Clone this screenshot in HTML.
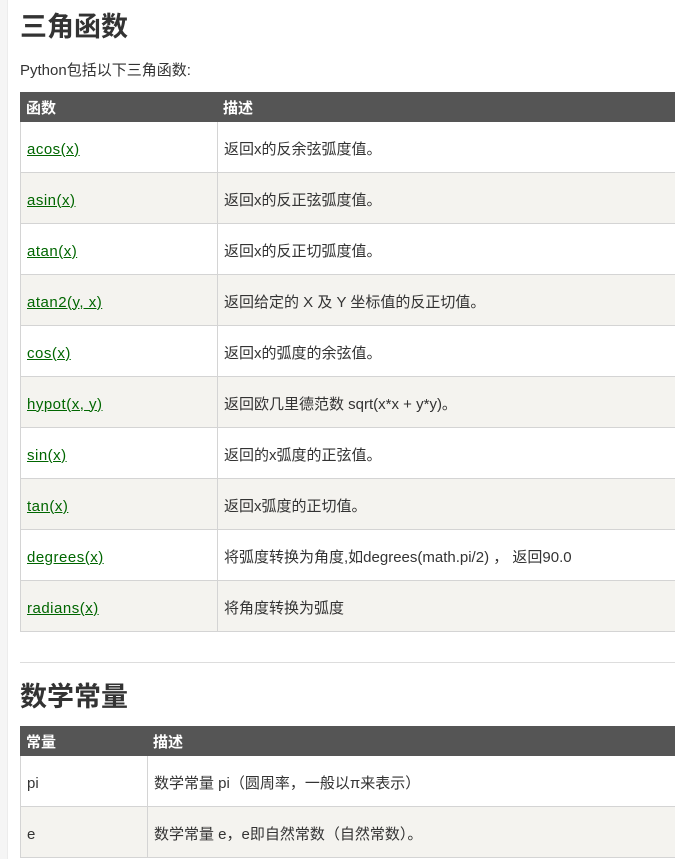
<!DOCTYPE html>
<html><head><meta charset="utf-8"><style>
body{margin:0;background:#fff;font-family:"Liberation Sans","Noto Sans CJK SC",sans-serif;color:#333;width:675px;height:859px;overflow:hidden;position:relative}
.strip{position:absolute;left:0;top:0;width:7px;height:859px;background:#f5f5f5;border-right:1px solid #ececec}
h2{position:absolute;left:20px;margin:0;font-size:27px;font-weight:bold;color:#333;line-height:30px}
p{position:absolute;left:20px;top:61px;margin:0;font-size:15px;line-height:20px}
table{position:absolute;left:20px;border-collapse:collapse;font-size:15px;table-layout:fixed}
th{background:#555;color:#fff;text-align:left;height:25px;padding:3px 5px 0;font-weight:bold;font-size:15px;border:1px solid #555;line-height:20px}
td{height:45px;padding:5px 6px 0;border:1px solid #d4d4d4;line-height:20px;vertical-align:middle}
td span{display:inline-block;height:20px;line-height:20px;vertical-align:middle}
tr:nth-child(odd) td{background:#f4f3ef}
a{color:#006600;text-decoration:underline;letter-spacing:0.5px}
hr{position:absolute;left:20px;top:662px;width:660px;margin:0;border:0;border-top:1px solid #ddd}
</style></head><body>
<div class="strip"></div>
<h2 style="top:12px">三角函数</h2>
<p>Python包括以下三角函数:</p>
<table style="top:92px;width:660px">
<colgroup><col style="width:197px"><col></colgroup>
<tr><th>函数</th><th>描述</th></tr>
<tr><td><span><a>acos(x)</a></span></td><td><span>返回x的反余弦弧度值。</span></td></tr>
<tr><td><span><a>asin(x)</a></span></td><td><span>返回x的反正弦弧度值。</span></td></tr>
<tr><td><span><a>atan(x)</a></span></td><td><span>返回x的反正切弧度值。</span></td></tr>
<tr><td><span><a>atan2(y, x)</a></span></td><td><span>返回给定的 X 及 Y 坐标值的反正切值。</span></td></tr>
<tr><td><span><a>cos(x)</a></span></td><td><span>返回x的弧度的余弦值。</span></td></tr>
<tr><td><span><a>hypot(x, y)</a></span></td><td><span>返回欧几里德范数 sqrt(x*x + y*y)。</span></td></tr>
<tr><td><span><a>sin(x)</a></span></td><td><span>返回的x弧度的正弦值。</span></td></tr>
<tr><td><span><a>tan(x)</a></span></td><td><span>返回x弧度的正切值。</span></td></tr>
<tr><td><span><a>degrees(x)</a></span></td><td><span>将弧度转换为角度,如degrees(math.pi/2) ， 返回90.0</span></td></tr>
<tr><td><span><a>radians(x)</a></span></td><td><span>将角度转换为弧度</span></td></tr>
</table>
<hr>
<h2 style="top:682px">数学常量</h2>
<table style="top:726px;width:660px">
<colgroup><col style="width:127px"><col></colgroup>
<tr><th>常量</th><th>描述</th></tr>
<tr><td><span>pi</span></td><td><span>数学常量 pi（圆周率，一般以π来表示）</span></td></tr>
<tr><td><span>e</span></td><td><span>数学常量 e，e即自然常数（自然常数）。</span></td></tr>
</table>
</body></html>
